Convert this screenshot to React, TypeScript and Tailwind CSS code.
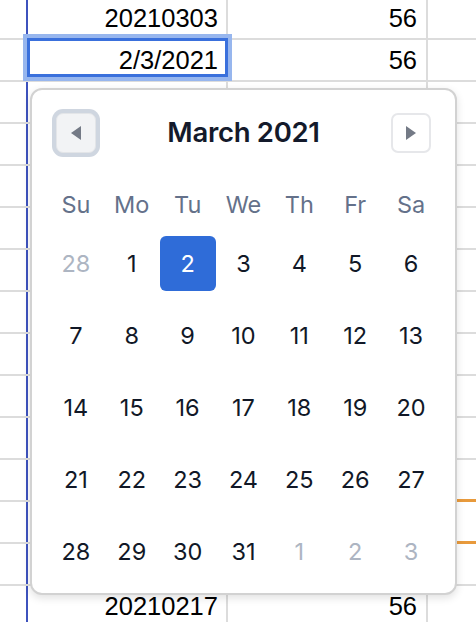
import * as React from "react";

type Row = { b: string; c: string; selected?: boolean; orange?: boolean };

const rows: Row[] = [
  { b: "20210303", c: "56" },
  { b: "2/3/2021", c: "56", selected: true },
  { b: "", c: "" },
  { b: "", c: "" },
  { b: "", c: "" },
  { b: "", c: "" },
  { b: "", c: "" },
  { b: "", c: "" },
  { b: "", c: "" },
  { b: "", c: "" },
  { b: "", c: "" },
  { b: "", c: "", orange: true },
  { b: "", c: "", orange: true },
  { b: "", c: "" },
  { b: "20210217", c: "56" },
];

const weekdays = ["Su", "Mo", "Tu", "We", "Th", "Fr", "Sa"];

type Day = { n: number; muted?: boolean; selected?: boolean };

const weeks: Day[][] = [
  [{ n: 28, muted: true }, { n: 1 }, { n: 2, selected: true }, { n: 3 }, { n: 4 }, { n: 5 }, { n: 6 }],
  [{ n: 7 }, { n: 8 }, { n: 9 }, { n: 10 }, { n: 11 }, { n: 12 }, { n: 13 }],
  [{ n: 14 }, { n: 15 }, { n: 16 }, { n: 17 }, { n: 18 }, { n: 19 }, { n: 20 }],
  [{ n: 21 }, { n: 22 }, { n: 23 }, { n: 24 }, { n: 25 }, { n: 26 }, { n: 27 }],
  [{ n: 28 }, { n: 29 }, { n: 30 }, { n: 31 }, { n: 1, muted: true }, { n: 2, muted: true }, { n: 3, muted: true }],
];

export default function App() {
  return (
    <div className="relative h-[622px] w-[476px] overflow-hidden bg-white">
      <div className="mt-[-2px] flex flex-col font-['Liberation_Sans',Arial,sans-serif] text-[25.5px] text-black">
        {rows.map((row, i) => (
          <SheetRow key={i} row={row} />
        ))}
      </div>

      <DatePicker />
    </div>
  );
}

function SheetRow({ row }: { row: Row }) {
  return (
    <div className="flex h-[42px] border-b-2 border-[#dcdcdc]">
      <div className="w-[28px] shrink-0 border-r-2 border-[#3d52bd]" />
      <div className="relative flex w-[200px] shrink-0 items-center justify-end border-r-2 border-[#dcdcdc] pr-[8px]">
        {row.selected ? (
          <div className="absolute left-[-5px] top-[-6px] h-[47px] w-[209px] border-4 border-[#97b6ee]">
            <div className="h-full w-full border-[3px] border-[#3a70dc]" />
          </div>
        ) : null}
        <span className="relative">{row.b}</span>
      </div>
      <div className="flex w-[200px] shrink-0 items-center justify-end border-r-2 border-[#dcdcdc] pr-[9px]">
        {row.c}
      </div>
      <div className="relative flex-1">
        {row.orange ? (
          <div className="absolute bottom-[-2px] left-0 right-0 h-[3px] bg-[#e89a3c]" />
        ) : null}
      </div>
    </div>
  );
}

function DatePicker() {
  return (
    <div className="absolute left-[30px] top-[88px] flex h-[507px] w-[427px] flex-col rounded-[12px] border-2 border-[#d2d2d2] bg-white px-[16px] pt-[23px] font-['Inter',sans-serif] shadow-[0_3px_8px_rgba(0,0,0,0.12)]">
      <div className="flex h-[40px] items-center justify-between px-[8px]">
        <button className="flex h-[40px] w-[40px] items-center justify-center rounded-[7px] border border-[#e3e5e8] bg-[#f2f3f5] ring-4 ring-[#cfd6e0]">
          <svg width="10" height="14" viewBox="0 0 10 14">
            <polygon points="10,0 10,14 0,7" fill="#747a86" />
          </svg>
        </button>
        <h2 className="text-[27.5px] font-semibold tracking-[-0.3px] text-[#141a2b]">March 2021</h2>
        <button className="flex h-[40px] w-[40px] items-center justify-center rounded-[7px] border-2 border-[#e6e7ea] bg-white">
          <svg width="10" height="14" viewBox="0 0 10 14">
            <polygon points="0,0 0,14 10,7" fill="#747a86" />
          </svg>
        </button>
      </div>

      <div className="mt-[32px] grid grid-cols-7">
        {weekdays.map((d) => (
          <div key={d} className="flex h-[40px] items-center justify-center text-[23.5px] text-[#64718a]">
            {d}
          </div>
        ))}
      </div>

      <div className="mt-[11px] flex flex-col gap-[17px]">
        {weeks.map((week, i) => (
          <div key={i} className="grid h-[55px] grid-cols-7">
            {week.map((day, j) => (
              <div key={j} className="flex items-center justify-center">
                <span
                  className={
                    day.selected
                      ? "flex h-[55px] w-[56px] items-center justify-center rounded-[6px] bg-[#2f6cd8] text-[23.5px] text-white"
                      : day.muted
                        ? "text-[23.5px] text-[#adb5c2]"
                        : "text-[23.5px] text-[#111827]"
                  }
                >
                  {day.n}
                </span>
              </div>
            ))}
          </div>
        ))}
      </div>
    </div>
  );
}
